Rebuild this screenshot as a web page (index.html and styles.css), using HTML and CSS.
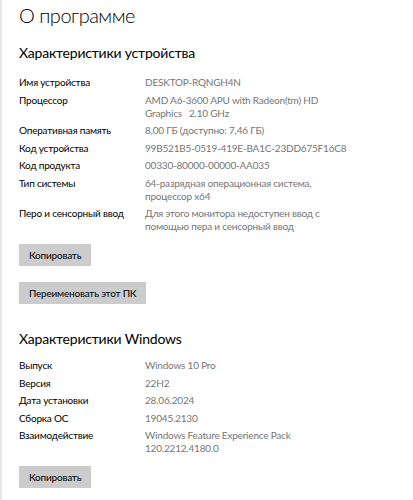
FILE: index.html
```html
<!DOCTYPE html>
<html>
<head>
    <title>О программе</title>
    <meta name="viewport" content="width=device-width, initial-scale=1">
    <link rel="stylesheet" href="styles.css">
</head>
<body>
    <div class="page">
        <h1>О программе</h1>

        <h2>Характеристики устройства</h2>
        <div class="spec-list">
            <div class="spec-row">
                <span class="spec-name">Имя устройства</span>
                <span class="spec-value">DESKTOP-RQNGH4N</span>
            </div>
            <div class="spec-row">
                <span class="spec-name">Процессор</span>
                <span class="spec-value">AMD A6-3600 APU with Radeon(tm) HD<br>Graphics&nbsp;&nbsp;&nbsp;2.10 GHz</span>
            </div>
            <div class="spec-row">
                <span class="spec-name">Оперативная память</span>
                <span class="spec-value">8,00 ГБ (доступно: 7,46 ГБ)</span>
            </div>
            <div class="spec-row">
                <span class="spec-name">Код устройства</span>
                <span class="spec-value">99B521B5-0519-419E-BA1C-23DD675F16C8</span>
            </div>
            <div class="spec-row">
                <span class="spec-name">Код продукта</span>
                <span class="spec-value">00330-80000-00000-AA035</span>
            </div>
            <div class="spec-row">
                <span class="spec-name">Тип системы</span>
                <span class="spec-value">64-разрядная операционная система,<br>процессор x64</span>
            </div>
            <div class="spec-row">
                <span class="spec-name">Перо и сенсорный ввод</span>
                <span class="spec-value">Для этого монитора недоступен ввод с<br>помощью пера и сенсорный ввод</span>
            </div>
        </div>
        <div class="actions">
            <button class="button_gray">Копировать</button>
            <button class="button_gray">Переименовать этот ПК</button>
        </div>

        <h2>Характеристики Windows</h2>
        <div class="spec-list">
            <div class="spec-row">
                <span class="spec-name">Выпуск</span>
                <span class="spec-value">Windows 10 Pro</span>
            </div>
            <div class="spec-row">
                <span class="spec-name">Версия</span>
                <span class="spec-value">22H2</span>
            </div>
            <div class="spec-row">
                <span class="spec-name">Дата установки</span>
                <span class="spec-value">28.06.2024</span>
            </div>
            <div class="spec-row">
                <span class="spec-name">Сборка ОС</span>
                <span class="spec-value">19045.2130</span>
            </div>
            <div class="spec-row">
                <span class="spec-name">Взаимодействие</span>
                <span class="spec-value">Windows Feature Experience Pack<br>120.2212.4180.0</span>
            </div>
        </div>
        <div class="actions">
            <button class="button_gray">Копировать</button>
        </div>
    </div>
</body>
</html>
```

FILE: styles.css
```css
html {
	font-family: Lato, "Open Sans", sans-serif;
	color: #000;
  }
  body {
	margin: 0;
	background-color: #fff;
  }
  .page {
	min-height: 500px;
	border-left: 2px solid #e6e6e6;
	padding: 0 0 0 17px;
	box-sizing: border-box;
  }
  h1 {
	margin: 0;
	padding-top: 1px;
	font-size: 20px;
	font-weight: 300;
	letter-spacing: -0.5px;
	line-height: 28px;
  }
  h2 {
	margin: 13px 0 12px 0;
	font-size: 14px;
	font-weight: 400;
	letter-spacing: -0.2px;
	line-height: 22px;
  }
  .spec-list {
	display: flex;
	flex-direction: column;
	gap: 4.5px;
  }
  .spec-row {
	display: flex;
	font-size: 10px;
	letter-spacing: -0.2px;
	line-height: 13px;
  }
  .spec-name {
	flex: 0 0 126px;
  }
  .spec-value {
	color: #767676;
	white-space: nowrap;
  }
  .actions {
	display: flex;
	flex-direction: column;
	align-items: flex-start;
	gap: 16px;
	margin-top: 11px;
  }
  .actions + h2 {
	margin-top: 24px;
	margin-bottom: 9px;
  }
  .button_gray {
	height: 22px;
	padding: 0 10px;
	font-family: inherit;
	font-size: 10px;
	letter-spacing: -0.2px;
	color: #000;
	background-color: #cccccc;
	border: none;
	border-radius: 0;
	outline: none;
  }
```
